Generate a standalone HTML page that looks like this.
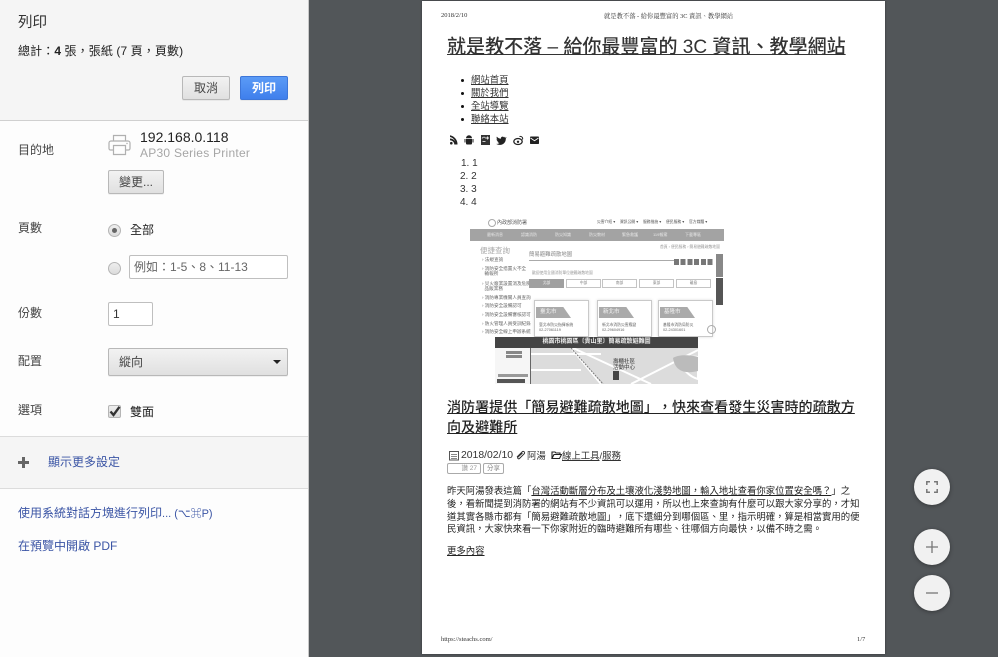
<!DOCTYPE html>
<html lang="zh-Hant"><head><meta charset="utf-8"><title>列印</title>
<style>
*{box-sizing:border-box;text-spacing-trim:space-all}
html,body{margin:0;padding:0;width:998px;height:657px;overflow:hidden;background:#525659}
body{position:relative;font-family:"Liberation Sans","Noto Sans CJK TC",sans-serif;color:#333}
.a{position:absolute;white-space:nowrap}
.lbl{font-size:12px;line-height:16px;color:#444;left:18px}
.btn{position:absolute;border:1px solid #b8b8b8;border-radius:2px;background:linear-gradient(#f2f2f2,#e0e0e0);font-size:12px;text-align:center;color:#444;box-shadow:0 1px 0 rgba(0,0,0,.05)}
.inp{position:absolute;background:#fff;border:1px solid #bfbfbf;border-radius:2px;font-size:12px;color:#444}
.lnk{color:#3b55a5;font-size:12px;line-height:16px}
.pg{font-family:"Liberation Sans","Noto Sans CJK TC",sans-serif;color:#333}
.serif{font-family:"Liberation Serif","Noto Serif CJK SC",serif;font-size:6.500px;line-height:8px;color:#333}
u{text-underline-offset:1px}
.li{font-size:9.400px;line-height:13px;color:#333}
.ol{font-size:10px;line-height:13px;color:#333}
.p{font-size:9.400px;line-height:13px;color:#222;left:447px;width:415px}
.fab{position:absolute;left:914px;width:36px;height:36px;border-radius:50%;background:#f1f1f1;box-shadow:0 1px 4px rgba(0,0,0,.35)}
.m{position:absolute;font-size:3.800px;line-height:5px;color:#666;white-space:nowrap}
.mi{position:absolute;left:482px;font-size:4.600px;line-height:6px;color:#666;white-space:nowrap}
.card{position:absolute;top:300px;width:55px;height:37px;background:#fff;border:1px solid #c9c9c9;box-shadow:0 0 3px #ddd}
.tag{position:absolute;left:1px;top:6px;height:11px;background:#aaa;color:#f4f4f4;font-size:5.500px;line-height:11px;padding-left:4px;clip-path:polygon(0 0,78% 0,100% 100%,0 100%)}
.tab{position:absolute;top:279px;height:9px;width:35px;background:#fff;border:1px solid #c4c4c4;font-size:3.800px;line-height:7px;text-align:center;color:#888}
.nb{position:absolute;top:229px;height:12px;font-size:4px;line-height:12px;color:#e6e6e6;white-space:nowrap}
</style></head><body>

<!-- sidebar -->
<div class="a" style="left:0;top:0;width:309px;height:657px;background:#fdfdfd;border-right:1px solid #c8c8c8"></div>
<div class="a" style="left:0;top:0;width:308px;height:121px;background:#f5f5f5;border-bottom:1px solid #d0d0d0"></div>
<div class="a" style="left:0;top:436px;width:308px;height:53px;background:#f5f5f5;border-top:1px solid #dcdcdc;border-bottom:1px solid #dcdcdc"></div>

<div class="a" style="left:18px;top:13px;font-size:14.500px;line-height:21px;color:#333">列印</div>
<div class="a" style="left:18px;top:43px;font-size:12px;letter-spacing:.1px;line-height:17px;color:#222">總計：<b>4</b> 張，張紙 (7 頁，頁數)</div>
<div class="btn" style="left:182px;top:76px;width:48px;height:24px;line-height:22px">取消</div>
<div class="btn" style="left:240px;top:76px;width:48px;height:24px;line-height:22px;background:linear-gradient(#5b9bf6,#3f7fec);border-color:#3d76d8;color:#fff;font-weight:bold">列印</div>

<div class="a lbl" style="top:142px">目的地</div>
<svg class="a" style="left:108px;top:134px" width="24" height="22" viewBox="0 0 24 22" fill="none" stroke="#b0b0b0" stroke-width="1.200"><path d="M5.500 7V1.500h12V7"/><path d="M5 16H2.500a1.500 1.500 0 0 1-1.500-1.500V9a2 2 0 0 1 2-2h17a2 2 0 0 1 2 2v5.500a1.500 1.500 0 0 1-1.500 1.500H18"/><path d="M5.500 11.500h12v9h-12z" fill="#fdfdfd"/><circle cx="19" cy="9.500" r=".7" fill="#a8a8a8" stroke="none"/></svg>
<div class="a" style="left:140px;top:129px;font-size:14px;line-height:17px;color:#222">192.168.0.118</div>
<div class="a" style="left:140px;top:145px;font-size:12px;line-height:16px;color:#a6a6a6;letter-spacing:.25px">AP30 Series Printer</div>
<div class="btn" style="left:108px;top:170px;width:56px;height:24px;line-height:22px">變更...</div>

<div class="a lbl" style="top:220px">頁數</div>
<div class="a" style="left:108px;top:224px;width:13px;height:13px;border-radius:50%;border:1px solid #b5b5b5;background:linear-gradient(#eee,#dcdcdc)"></div>
<div class="a" style="left:112px;top:228px;width:5px;height:5px;border-radius:50%;background:#666"></div>
<div class="a" style="left:130px;top:222px;font-size:12px;line-height:16px;color:#222">全部</div>
<div class="a" style="left:108px;top:262px;width:13px;height:13px;border-radius:50%;border:1px solid #b5b5b5;background:linear-gradient(#eee,#dcdcdc)"></div>
<div class="inp" style="left:129px;top:255px;width:159px;height:24px;line-height:22px;padding-left:4px;color:#666">例如：1-5、8、11-13</div>

<div class="a lbl" style="top:305px">份數</div>
<div class="inp" style="left:108px;top:302px;width:45px;height:24px;line-height:22px;padding-left:4px;color:#333">1</div>

<div class="a lbl" style="top:353px">配置</div>
<div class="btn" style="left:108px;top:348px;width:180px;height:28px;line-height:26px;text-align:left;padding-left:10px">縱向</div>
<div class="a" style="left:273px;top:360px;width:0;height:0;border:4.500px solid transparent;border-top:4.500px solid #222;border-bottom:0"></div>

<div class="a lbl" style="top:402px">選項</div>
<div class="a" style="left:108px;top:405px;width:13px;height:13px;border:1px solid #b5b5b5;border-radius:2px;background:linear-gradient(#eee,#dcdcdc)"></div>
<svg class="a" style="left:109px;top:405px" width="12" height="12" viewBox="0 0 12 12"><path d="M1.500 6.500L4.500 10 10.500 1.800" fill="none" stroke="#333" stroke-width="2.400"/></svg>
<div class="a" style="left:130px;top:404px;font-size:12px;line-height:16px;color:#222">雙面</div>

<div class="a" style="left:18px;top:461px;width:11px;height:3px;background:#666"></div>
<div class="a" style="left:22px;top:457px;width:3px;height:11px;background:#666"></div>
<div class="a lnk" style="left:48px;top:454px">顯示更多設定</div>
<div class="a lnk" style="left:18px;top:505px">使用系統對話方塊進行列印<span style="font-size:11px">... (⌥⌘P)</span></div>
<div class="a lnk" style="left:18px;top:538px">在預覽中開啟 PDF</div>

<!-- page -->
<div class="a" style="left:422px;top:1px;width:463px;height:653px;background:#fff;box-shadow:0 0 2px rgba(0,0,0,.4)"></div>
<div class="a serif" style="left:441px;top:12px">2018/2/10</div>
<div class="a serif" style="left:604px;top:13px;font-size:6.300px">就是教不落 - 給你最豐富的 3C 資訊、教學網站</div>
<div class="a pg" style="left:447px;top:35px;font-size:19.050px;line-height:26px;font-weight:500;text-decoration:underline;color:#333">就是教不落 – 給你最豐富的 3C 資訊、教學網站</div>

<div class="a" style="left:460.500px;top:78.500px;width:3px;height:3px;border-radius:50%;background:#111"></div>
<div class="a" style="left:460.500px;top:91.500px;width:3px;height:3px;border-radius:50%;background:#111"></div>
<div class="a" style="left:460.500px;top:104.500px;width:3px;height:3px;border-radius:50%;background:#111"></div>
<div class="a" style="left:460.500px;top:117.500px;width:3px;height:3px;border-radius:50%;background:#111"></div>
<div class="a li" style="left:471px;top:72.500px"><u>網站首頁</u></div>
<div class="a li" style="left:471px;top:85.500px"><u>關於我們</u></div>
<div class="a li" style="left:471px;top:98.500px"><u>全站導覽</u></div>
<div class="a li" style="left:471px;top:111.500px"><u>聯絡本站</u></div>

<svg class="a" style="left:449px;top:134px" width="92" height="12" viewBox="0 0 92 12">
<g fill="#222">
<circle cx="2.300" cy="9.200" r="1.300"/><path d="M1 4.500a6 6 0 0 1 6 6H5.300A4.300 4.300 0 0 0 1 6.200zM1 1.200a9.300 9.300 0 0 1 7.500 9.300H6.800A7.500 7.500 0 0 0 1 3z"/>
<path d="M17 4.300a3 3 0 0 1 6 0zM17 5h6v4.500a1 1 0 0 1-1 1h-4a1 1 0 0 1-1-1zM15.500 5h1v3.500h-1zM23.500 5h1v3.500h-1z"/>
<rect x="32" y="1" width="9" height="10" fill="#333"/>
<path d="M56.500 3.500c-.4.200-.8.300-1.200.3.400-.3.700-.6.800-1.100-.4.200-.8.400-1.200.5-1.300-1.300-3.400-.2-3 1.500-1.700-.1-3-.9-4-2.100-.6 1-.3 2.200.6 2.800-.3 0-.7-.1-1-.3 0 1.100.8 2 1.900 2.300-.3.100-.7.100-1 0 .3.900 1.100 1.500 2.100 1.600-1 .7-2.100 1-3.300.9 4.700 2.700 9.900-.3 9.600-5.500.4-.3.700-.6.900-.9z"/>
<rect x="81" y="2.500" width="9" height="7.500" rx=".8"/>
</g>
<ellipse cx="69" cy="7.500" rx="4.200" ry="3" fill="none" stroke="#222" stroke-width="1.300"/><circle cx="69" cy="7.800" r="1.200" fill="#222"/>
<path d="M70.500 2.500c2-.5 3.700 1 3 3" fill="none" stroke="#222" stroke-width="1"/>
<path d="M81.500 4l4 2.700 4-2.700" fill="none" stroke="#fff" stroke-width=".9"/>
<path d="M33 4.500c1-2 3.500-1.500 3.500 0M33.500 7.500h3" fill="none" stroke="#ccc" stroke-width=".9"/>
<path d="M37 4h3M38.500 2.500v3" stroke="#eee" stroke-width=".9"/>
</svg>

<div class="a ol" style="left:461px;top:157px">1. 1</div>
<div class="a ol" style="left:460px;top:170px">2. 2</div>
<div class="a ol" style="left:460px;top:183px">3. 3</div>
<div class="a ol" style="left:460px;top:196px">4. 4</div>

<!-- embedded image -->
<div class="a" style="left:470px;top:217px;width:254px;height:167px;background:#fff;overflow:hidden"></div>
<div class="a" style="left:488px;top:219px;width:8px;height:8px;border-radius:50%;border:1px solid #aaa"></div>
<div class="m" style="left:497px;top:220px;font-size:5px;line-height:6px;color:#555">內政部消防署</div>
<div class="m" style="left:597px;top:220px;color:#555">災害介紹 ▾　 資訊公開 ▾　 服務措施 ▾　 便民服務 ▾　 官方媒體 ▾</div>
<div class="a" style="left:470px;top:229px;width:254px;height:12px;background:#a3a3a3"></div>
<div class="nb" style="left:487px">最新消息</div><div class="nb" style="left:521px">認識消防</div><div class="nb" style="left:555px">防災知識</div><div class="nb" style="left:589px">防災教材</div><div class="nb" style="left:622px">緊急救護</div><div class="nb" style="left:653px">119報案</div><div class="nb" style="left:685px">下載專區</div>
<div class="m" style="left:480px;top:246px;font-size:7.500px;line-height:9px;color:#aaa">便捷查詢</div>
<div class="mi" style="top:257px">› 法規查詢</div>
<div class="mi" style="top:266px">› 消防安全措置火不全</div>
<div class="mi" style="top:271px">&nbsp;&nbsp;輸報所</div>
<div class="mi" style="top:281px">› 災火廠業設置消及危險</div>
<div class="mi" style="top:286px">&nbsp;&nbsp;品販業務</div>
<div class="mi" style="top:295px">› 消防專業機關人員查詢</div>
<div class="mi" style="top:303px">› 消防安全設備認可</div>
<div class="mi" style="top:312px">› 消防安全設備審核認可</div>
<div class="mi" style="top:321px">› 防火管理人員受訓紀錄</div>
<div class="mi" style="top:329px">› 消防安全線上申辦系統</div>
<div class="m" style="left:660px;top:245px;color:#999">首頁 › 便民服務 › 簡易避難疏散地圖</div>
<div class="m" style="left:529px;top:251px;font-size:5.400px;line-height:8px;color:#888">簡易避難疏散地圖</div>
<div class="a" style="left:529px;top:260px;width:185px;height:1px;background:#aaa"></div>
<div class="a" style="left:674px;top:259px;width:40px;height:6px;background:repeating-linear-gradient(90deg,#777 0 5px,#fff 5px 6.700px)"></div>
<div class="m" style="left:532px;top:271px;color:#999">歡迎使用全國消防單位避難疏散地圖</div>
<div class="a" style="left:529px;top:279px;width:35px;height:9px;background:#a0a0a0;color:#eee;font-size:3.800px;line-height:9px;text-align:center">北部</div>
<div class="tab" style="left:566px">中部</div><div class="tab" style="left:602px">南部</div><div class="tab" style="left:639px">東部</div><div class="tab" style="left:676px">離島</div>
<div class="card" style="left:534px"><div class="tag" style="width:35px">臺北市</div><div class="m" style="left:4px;top:22px">臺北市防災指揮系統<br>02-27061119</div></div>
<div class="card" style="left:597px"><div class="tag" style="width:35px">新北市</div><div class="m" style="left:4px;top:22px">新北市消防災害應變<br>02-29604916</div></div>
<div class="card" style="left:658px"><div class="tag" style="width:35px">基隆市</div><div class="m" style="left:4px;top:22px">基隆市消防局防災<br>02-24301601</div></div>
<div class="a" style="left:716px;top:254px;width:7px;height:23px;background:#888"></div>
<div class="a" style="left:716px;top:278px;width:7px;height:27px;background:#555"></div>
<div class="a" style="left:707px;top:325px;width:9px;height:9px;border:1px solid #aaa;border-radius:50%"></div>

<div class="a" style="left:495px;top:337px;width:203px;height:47px;background:#e2e2e2;overflow:hidden">
 <div class="a" style="left:0;top:0;width:203px;height:11px;background:#444;color:#eee;font-size:6px;line-height:11px;font-weight:bold;text-align:center">桃園市桃園區〔貴山里〕簡易疏散避難圖</div>
 <div class="a" style="left:0;top:11px;width:36px;height:36px;background:#f6f6f6;border-right:1px solid #666"></div>
 <div class="a" style="left:11px;top:14px;width:16px;height:3px;background:#888"></div>
 <div class="a" style="left:11px;top:18px;width:16px;height:3px;background:#888"></div>
 <div class="a" style="left:3px;top:37px;width:30px;height:3px;background:#999"></div>
 <div class="a" style="left:2px;top:42px;width:28px;height:4px;background:#555"></div>
 <svg class="a" style="left:36px;top:11px" width="167" height="36" viewBox="0 0 167 36" fill="none"><rect width="167" height="36" fill="#dcdcdc"/><path d="M0 6H70M0 22H50M40 0L70 36M42 0L120 36M100 36L167 2M150 15a18 18 0 0 1 17-6v22a25 25 0 0 1-17-16z" stroke="#fff" stroke-width="2"/><path d="M40 0L72 36" stroke="#777" stroke-width="1" stroke-dasharray="2 1"/><path d="M142 10c6-4 18-3 25-1v14c-12 3-23 1-25-13z" fill="#bbb"/><rect x="82" y="23" width="6" height="9" fill="#444"/></svg>
 <div class="a" style="left:118px;top:22px;font-size:5.500px;line-height:6px;color:#333">壽櫃社區<br>活動中心</div>
</div>

<!-- article -->
<div class="a pg" style="left:447px;top:397px;width:415px;white-space:normal;font-size:14.070px;line-height:20px;font-weight:500;color:#222;text-decoration:underline">消防署提供「簡易避難疏散地圖」，快來查看發生災害時的疏散方向及避難所</div>

<svg class="a" style="left:449px;top:450px" width="11" height="11" viewBox="0 0 11 11" fill="none" stroke="#555"><rect x=".5" y="1.500" width="9" height="8.500"/><path d="M2 4.500h6M2 6.500h6M2 8.500h6" stroke="#888"/></svg>
<div class="a" style="left:461px;top:449px;font-size:10.400px;line-height:14px;color:#333">2018/02/10</div>
<svg class="a" style="left:516px;top:450px" width="10" height="10" viewBox="0 0 10 10" fill="none" stroke="#333"><path d="M1 7L6.500 1.500a1.500 1.500 0 0 1 2 2L3.500 8.500a1 1 0 0 1-1.500-1.500L6.500 3"/></svg>
<div class="a" style="left:527px;top:449px;font-size:9.400px;line-height:14px;color:#333">阿湯</div>
<svg class="a" style="left:551px;top:450px" width="11" height="10" viewBox="0 0 11 10" fill="none" stroke="#222" stroke-width="1.100"><path d="M1 8.500V2h3l1 1h4v1.500M1 8.500h7.500L10.500 4.500H3z"/></svg>
<div class="a" style="left:562px;top:449px;font-size:9.400px;line-height:14px;color:#333"><u>線上工具</u>/<u>服務</u></div>
<div class="a" style="left:447px;top:463px;width:34px;height:11px;border:1px solid #aaa;border-radius:2px;font-size:6.500px;line-height:9px;color:#999;text-align:right;padding-right:3px">讚 27</div>
<div class="a" style="left:483px;top:463px;width:21px;height:11px;border:1px solid #aaa;border-radius:2px;font-size:6.500px;line-height:9px;color:#888;text-align:center">分享</div>

<div class="a p" style="top:483.500px">昨天阿湯發表這篇「<u>台灣活動斷層分布及土壤液化淺勢地圖，輸入地址查看你家位置安全嗎？</u>」之</div>
<div class="a p" style="top:496.500px">後，看新聞提到消防署的網站有不少資訊可以運用，所以也上來查詢有什麼可以跟大家分享的，才知</div>
<div class="a p" style="top:509.500px">道其實各縣市都有「簡易避難疏散地圖」，底下還細分到哪個區、里，指示明確，算是相當實用的便</div>
<div class="a p" style="top:522px">民資訊，大家快來看一下你家附近的臨時避難所有哪些、往哪個方向最快，以備不時之需。</div>
<div class="a p" style="top:543.500px"><u>更多內容</u></div>

<div class="a serif" style="left:441px;top:636px">https://steachs.com/</div>
<div class="a serif" style="left:857px;top:636px">1/7</div>

<!-- fabs -->
<div class="fab" style="top:469px"></div>
<svg class="a" style="left:926px;top:481px" width="12" height="12" viewBox="0 0 12 12" fill="none" stroke="#777" stroke-width="1.500"><path d="M.8 4V.8H4M8 .8h3.200V4M11.200 8v3.200H8M4 11.200H.8V8"/></svg>
<div class="fab" style="top:529px"></div>
<svg class="a" style="left:926px;top:541px" width="12" height="12" viewBox="0 0 12 12" fill="none" stroke="#777" stroke-width="1.300"><path d="M0 6h12M6 0v12"/></svg>
<div class="fab" style="top:575px"></div>
<svg class="a" style="left:926px;top:587px" width="12" height="12" viewBox="0 0 12 12" fill="none" stroke="#888" stroke-width="1.500"><path d="M0 6h12"/></svg>
</body></html>
